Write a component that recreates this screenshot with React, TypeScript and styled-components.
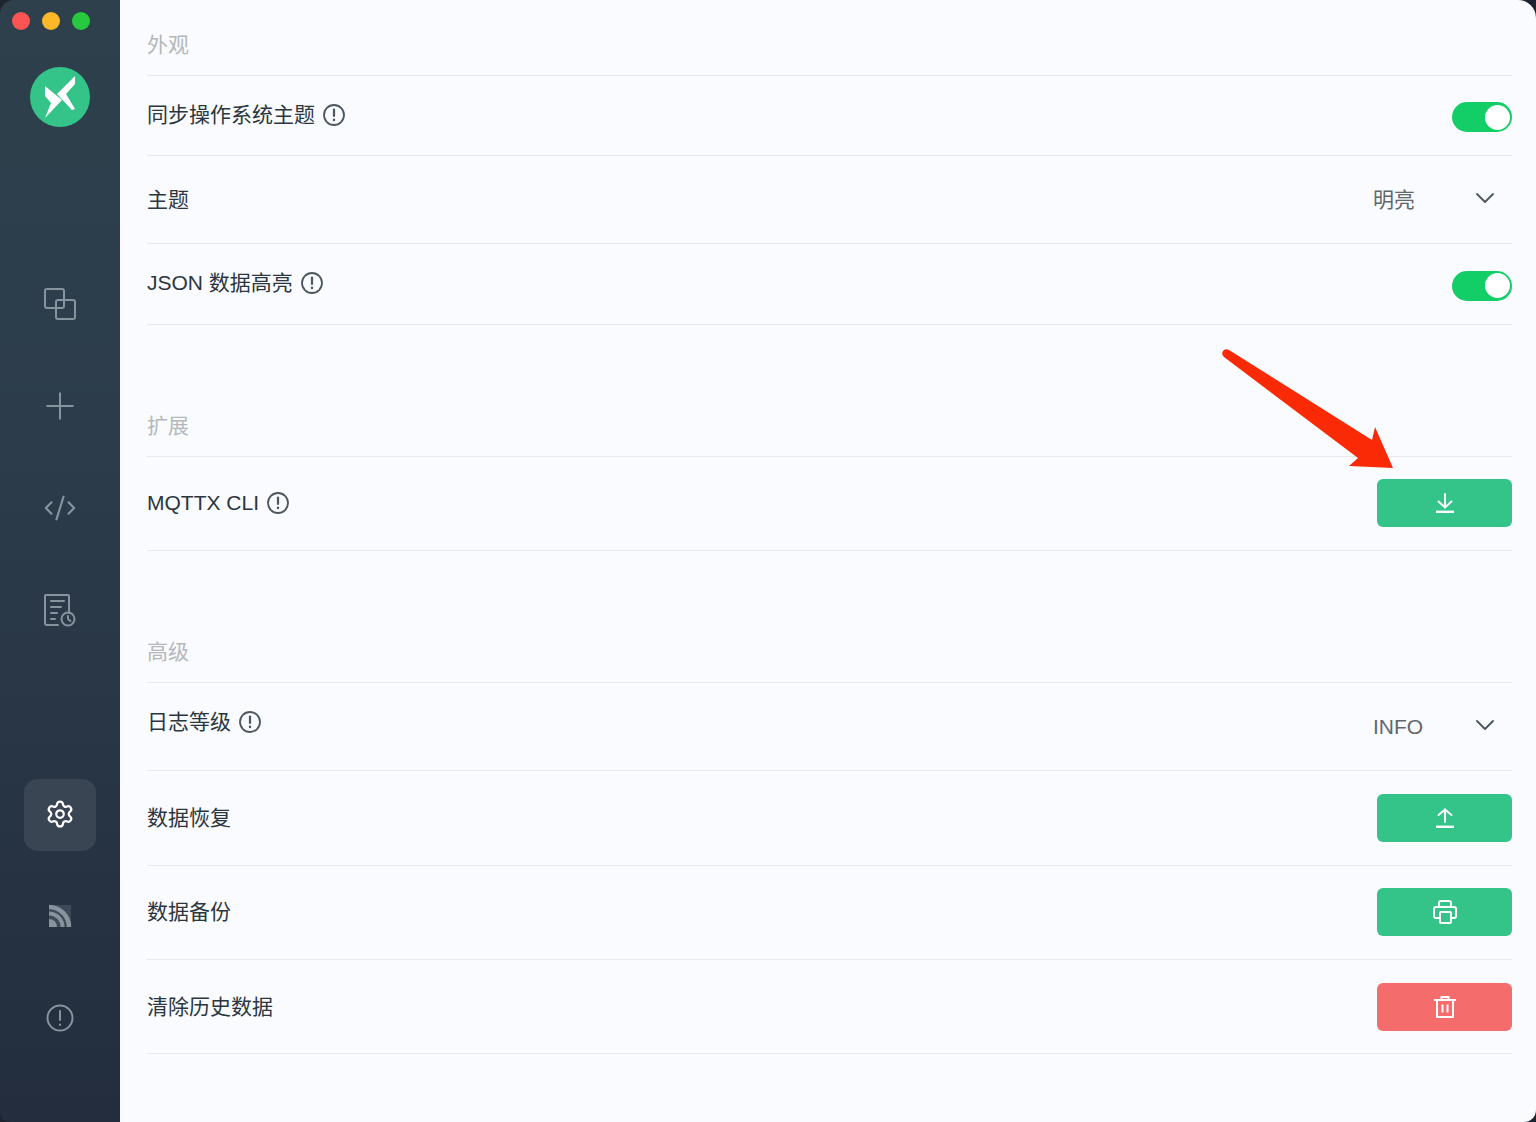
import * as React from 'react';
import styled, { createGlobalStyle } from 'styled-components';
import { ChevronDown, Plus, Settings, CodeXml } from 'lucide-react';

const GlobalStyle = createGlobalStyle`
    html, body {
        margin: 0;
        padding: 0;
        background: #1d2430;
    }
    * {
        box-sizing: border-box;
    }
`;

const Window = styled.div`
    position: relative;
    display: flex;
    width: 1536px;
    height: 1122px;
    overflow: hidden;
    background: #1d2430;
    font-family: "Liberation Sans", "Noto Sans CJK SC", sans-serif;
`;

const Sidebar = styled.aside`
    flex: 0 0 120px;
    display: flex;
    flex-direction: column;
    align-items: center;
    padding: 12px 0 68px;
    background: linear-gradient(180deg, #2e404c 0%, #2c3c4b 40%, #232d3d 100%);
    border-top-left-radius: 14px;
    border-bottom-left-radius: 10px;
`;

const Lights = styled.div`
    display: flex;
    align-self: flex-start;
    gap: 12px;
    height: 18px;
    margin-left: 12px;
`;

const Light = styled.span<{ $color: string }>`
    width: 18px;
    height: 18px;
    border-radius: 50%;
    background: ${p => p.$color};
`;

const LogoWrap = styled.div`
    margin-top: 37px;
    width: 60px;
    height: 60px;
`;

const NavGroup = styled.nav<{ $top?: boolean }>`
    display: flex;
    flex-direction: column;
    gap: 30px;
    margin-top: ${p => (p.$top ? '141px' : 'auto')};
`;

const NavItem = styled.div<{ $active?: boolean }>`
    width: 72px;
    height: 72px;
    display: flex;
    align-items: center;
    justify-content: center;
    border-radius: 14px;
    color: ${p => (p.$active ? '#ffffff' : '#87949e')};
    background: ${p => (p.$active ? '#3a4553' : 'transparent')};
    ${p => (p.$active ? 'margin: 1px 0 -1px; padding-bottom: 2px;' : '')}
`;

const Main = styled.main`
    flex: 1;
    padding: 0 24px 0 27px;
    background: #f9fbfe;
    border-top-right-radius: 18px;
    border-bottom-right-radius: 12px;
`;

const SectionTitle = styled.h2<{ $height: number }>`
    display: flex;
    align-items: flex-end;
    height: ${p => p.$height}px;
    margin: 0;
    padding-bottom: 17px;
    font-size: 21px;
    line-height: 26px;
    font-weight: 400;
    color: #b5b8bb;
    border-bottom: 1px solid #e6e8ec;
`;

const Row = styled.div<{ $height: number }>`
    display: flex;
    align-items: center;
    justify-content: space-between;
    height: ${p => p.$height}px;
    border-bottom: 1px solid #e6e8ec;
`;

const Label = styled.div<{ $lift?: number }>`
    display: flex;
    align-items: center;
    gap: 8px;
    margin-bottom: ${p => p.$lift ?? 0}px;
    font-size: 21px;
    line-height: 28px;
    color: #2c3640;
`;

const Info = styled.svg`
    width: 22px;
    height: 22px;
    color: #4d5660;
`;

const Toggle = styled.div`
    position: relative;
    width: 60px;
    height: 30px;
    margin-top: 3px;
    border-radius: 15px;
    background: #13ce66;

    &::after {
        content: '';
        position: absolute;
        top: 2.5px;
        right: 2.5px;
        width: 25px;
        height: 25px;
        border-radius: 50%;
        background: #ffffff;
    }
`;

const Select = styled.div`
    display: flex;
    align-items: center;
    justify-content: space-between;
    width: 139px;
    padding-right: 11px;
    font-size: 21px;
    line-height: 28px;
    color: #61666c;

    svg {
        margin-top: -4px;
        color: #4d5660;
    }
`;

const ActionButton = styled.button<{ $danger?: boolean; $lift?: number }>`
    display: flex;
    align-items: center;
    justify-content: center;
    width: 135px;
    height: 48px;
    margin-bottom: ${p => p.$lift ?? 0}px;
    padding: 0;
    border: 0;
    border-radius: 6px;
    color: #ffffff;
    background: ${p => (p.$danger ? '#f56c6c' : '#34c388')};
`;

const ArrowOverlay = styled.svg`
    position: absolute;
    left: 1220px;
    top: 345px;
    width: 180px;
    height: 130px;
`;

const InfoIcon = () => (
    <Info viewBox="0 0 22 22" fill="none" stroke="currentColor" strokeWidth="1.8" strokeLinecap="round">
        <circle cx="11" cy="11" r="10" />
        <path d="M11 5.500v6.500" strokeWidth="2.200" />
        <path d="M11 15.800v.2" strokeWidth="2.400" />
    </Info>
);

const Logo = () => (
    <LogoWrap>
        <svg width="60" height="60" viewBox="0 0 60 60">
            <circle cx="30" cy="30" r="30" fill="#34c388" />
            <path d="M15 19 32 33 15 51 21 36 15 29Z" fill="#ffffff" />
            <path d="M45 9 27 27 42 43 45 42 36 27 45 17Z" fill="#ffffff" />
        </svg>
    </LogoWrap>
);

const Windows = () => (
    <svg width="34" height="34" viewBox="0 0 34 34" fill="none" stroke="currentColor" strokeWidth="2">
        <rect x="2" y="2" width="19" height="19" rx="2" />
        <rect x="13" y="13" width="19" height="19" rx="2" />
    </svg>
);

const Logs = () => (
    <svg width="34" height="34" viewBox="0 0 34 34" fill="none" stroke="currentColor" strokeWidth="2" strokeLinecap="round">
        <path d="M15 32H4a2 2 0 0 1-2-2V3a1 1 0 0 1 1-1h22a1 1 0 0 1 1 1v17" />
        <path d="M8 8h13M8 14h10M8 20h6M8 26h4" />
        <circle cx="25" cy="26" r="6.500" />
        <path d="M25 23v3l2.500 2" />
    </svg>
);

const Feed = () => (
    <svg width="24" height="24" viewBox="0 0 24 24" fill="none" stroke="#87949e">
        <rect x="1" y="1" width="22" height="22" fill="#87949e" opacity="0.25" stroke="none" />
        <path d="M1 15a8 8 0 0 1 8 8H1Z" fill="#87949e" stroke="none" />
        <path d="M1 9.500A13.500 13.500 0 0 1 14.500 23" strokeWidth="4" />
        <path d="M1 3A20 20 0 0 1 21 23" strokeWidth="4.500" />
    </svg>
);

const About = () => (
    <svg width="28" height="28" viewBox="0 0 28 28" fill="none" stroke="currentColor" strokeWidth="2" strokeLinecap="round">
        <circle cx="14" cy="14" r="12.500" />
        <path d="M14 7v9" />
        <path d="M14 20.500v.4" />
    </svg>
);

const DownloadIcon = () => (
    <svg width="20" height="20" viewBox="0 0 20 20" fill="none" stroke="currentColor" strokeWidth="2" strokeLinecap="round">
        <path d="M10 1v13" />
        <path d="M3.500 8.500 10 14.500l6.500-6" />
        <path d="M1 18.800h18" strokeWidth="2.400" strokeLinecap="butt" />
    </svg>
);

const UploadIcon = () => (
    <svg width="20" height="20" viewBox="0 0 20 20" fill="none" stroke="currentColor" strokeWidth="2" strokeLinecap="round">
        <path d="M10 1.500V14" />
        <path d="M3.500 7 10 1.500 16.500 7" />
        <path d="M1 18.800h18" strokeWidth="2.400" strokeLinecap="butt" />
    </svg>
);

const PrinterIcon = () => (
    <svg width="24" height="24" viewBox="0 0 24 24" fill="none" stroke="currentColor" strokeWidth="2" strokeLinejoin="round">
        <path d="M6 7V3a2 2 0 0 1 2-2h8a2 2 0 0 1 2 2v4" />
        <path d="M7 18H3a2 2 0 0 1-2-2V9a2 2 0 0 1 2-2h18a2 2 0 0 1 2 2v7a2 2 0 0 1-2 2h-3" />
        <rect x="7" y="12" width="11" height="11" rx="1" />
    </svg>
);

const TrashIcon = () => (
    <svg width="22" height="22" viewBox="0 0 22 22" fill="none" stroke="currentColor" strokeWidth="2">
        <path d="M0 4h22" />
        <path d="M7.500 4V1h7v3" />
        <path d="M3 4v17h16V4" />
        <path d="M8.500 8.500v8M13.500 8.500v8" />
    </svg>
);

export default function App() {
    return (
        <Window>
            <GlobalStyle />
            <Sidebar>
                <Lights>
                    <Light $color="#fc5353" />
                    <Light $color="#fdb827" />
                    <Light $color="#27c93f" />
                </Lights>
                <Logo />
                <NavGroup $top>
                    <NavItem><Windows /></NavItem>
                    <NavItem><Plus size={44} strokeWidth={1.100} /></NavItem>
                    <NavItem><CodeXml size={34} strokeWidth={1.5} /></NavItem>
                    <NavItem><Logs /></NavItem>
                </NavGroup>
                <NavGroup>
                    <NavItem $active><Settings size={30} strokeWidth={1.8} /></NavItem>
                    <NavItem><Feed /></NavItem>
                    <NavItem><About /></NavItem>
                </NavGroup>
            </Sidebar>
            <Main>
                <section>
                    <SectionTitle $height={76}>外观</SectionTitle>
                    <Row $height={80}>
                        <Label $lift={2}>同步操作系统主题<InfoIcon /></Label>
                        <Toggle />
                    </Row>
                    <Row $height={88}>
                        <Label>主题</Label>
                        <Select>明亮<ChevronDown size={32} strokeWidth={1.400} /></Select>
                    </Row>
                    <Row $height={81}>
                        <Label $lift={2}>JSON 数据高亮<InfoIcon /></Label>
                        <Toggle />
                    </Row>
                </section>
                <section>
                    <SectionTitle $height={132}>扩展</SectionTitle>
                    <Row $height={94}>
                        <Label $lift={2}>MQTTX CLI<InfoIcon /></Label>
                        <ActionButton $lift={2}><DownloadIcon /></ActionButton>
                    </Row>
                </section>
                <section>
                    <SectionTitle $height={132}>高级</SectionTitle>
                    <Row $height={88}>
                        <Label $lift={10}>日志等级<InfoIcon /></Label>
                        <Select>INFO<ChevronDown size={32} strokeWidth={1.400} /></Select>
                    </Row>
                    <Row $height={95}>
                        <Label>数据恢复</Label>
                        <ActionButton><UploadIcon /></ActionButton>
                    </Row>
                    <Row $height={94}>
                        <Label $lift={2}>数据备份</Label>
                        <ActionButton $lift={2}><PrinterIcon /></ActionButton>
                    </Row>
                    <Row $height={94}>
                        <Label>清除历史数据</Label>
                        <ActionButton $danger><TrashIcon /></ActionButton>
                    </Row>
                </section>
            </Main>
            <ArrowOverlay viewBox="0 0 180 130">
                <path d="M3 6Q5 3 9 5L152 95 155 82 173 123 129 121 138 113 4 12Q1 9 3 6Z" fill="#fb2a06" />
            </ArrowOverlay>
        </Window>
    );
}
